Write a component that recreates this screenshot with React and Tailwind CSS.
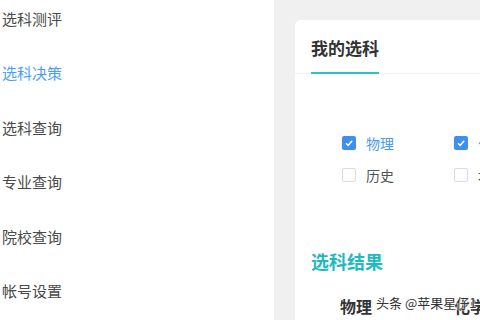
import React from "react";

const navItems = ["选科测评", "选科决策", "选科查询", "专业查询", "院校查询", "帐号设置"];

function Check({ checked }) {
  if (checked) {
    return (
      <span className="w-[14px] h-[14px] rounded-[2px] bg-[#3d8ff0] flex items-center justify-center">
        <svg width="10" height="10" viewBox="0 0 10 10">
          <path d="M2 5.2 L4.2 7.3 L8.2 2.8" fill="none" stroke="#fff" strokeWidth="1.5" />
        </svg>
      </span>
    );
  }
  return <span className="w-[14px] h-[14px] rounded-[2px] border border-[#dcdcdc] bg-white" />;
}

function Option({ label, checked }) {
  return (
    <div className="flex items-center gap-[10px] w-[112px] h-[20px] shrink-0">
      <Check checked={checked} />
      <span className={`text-[14px] ${checked ? "text-[#4a9af0]" : "text-[#555]"}`}>{label}</span>
    </div>
  );
}

export default function App() {
  return (
    <div
      className="w-[480px] h-[320px] flex overflow-hidden relative bg-[#f0f0f0]"
      style={{ fontFamily: '"Noto Sans CJK SC", "Noto Sans", sans-serif' }}
    >
      {/* Sidebar */}
      <div className="w-[274px] shrink-0 bg-white flex flex-col mt-[-8px]">
        {navItems.map((t, i) => (
          <div
            key={t}
            className={`h-[54.4px] shrink-0 flex items-center pl-[2px] text-[15px] ${
              i === 1 ? "text-[#4b9ef3]" : "text-[#4a4a4a]"
            }`}
          >
            {t}
          </div>
        ))}
      </div>

      {/* Main */}
      <div className="w-[206px] shrink-0 pl-[21px] pt-[20px]">
        <div className="bg-white rounded-tl-[6px] h-full w-[300px]">
          <div className="h-[54px] border-b border-[#f2f2f2] pl-[16px] flex">
            <div className="flex flex-col justify-end">
              <span className="text-[17px] font-bold text-[#333] leading-[22px] mb-[13px]">我的选科</span>
              <div className="h-[2px] bg-[#2cc2c6] mb-[-1px]" />
            </div>
          </div>

          <div className="pl-[47px] pt-[59px] flex flex-col gap-[12px]">
            <div className="flex">
              <Option label="物理" checked />
              <Option label="化学" checked />
            </div>
            <div className="flex">
              <Option label="历史" />
              <Option label="地理" />
            </div>
          </div>

          <div className="pl-[16px] mt-[65px] text-[18px] font-bold text-[#1fb9c2] leading-[22px]">选科结果</div>

          <div className="flex pl-[45px] mt-[22px]">
            <span className="w-[114px] shrink-0 text-[16px] font-bold text-[#333]">物理</span>
            <span className="text-[16px] font-bold text-[#333]">化学</span>
          </div>
        </div>
      </div>

      {/* Watermark */}
      <div
        className="absolute left-[376px] top-[293px] text-[13px] text-[#333] whitespace-nowrap"
        style={{ textShadow: "0 0 2px #fff, 0 0 2px #fff, 0 0 2px #fff" }}
      >
        头条 @苹果星仔1
      </div>
    </div>
  );
}
